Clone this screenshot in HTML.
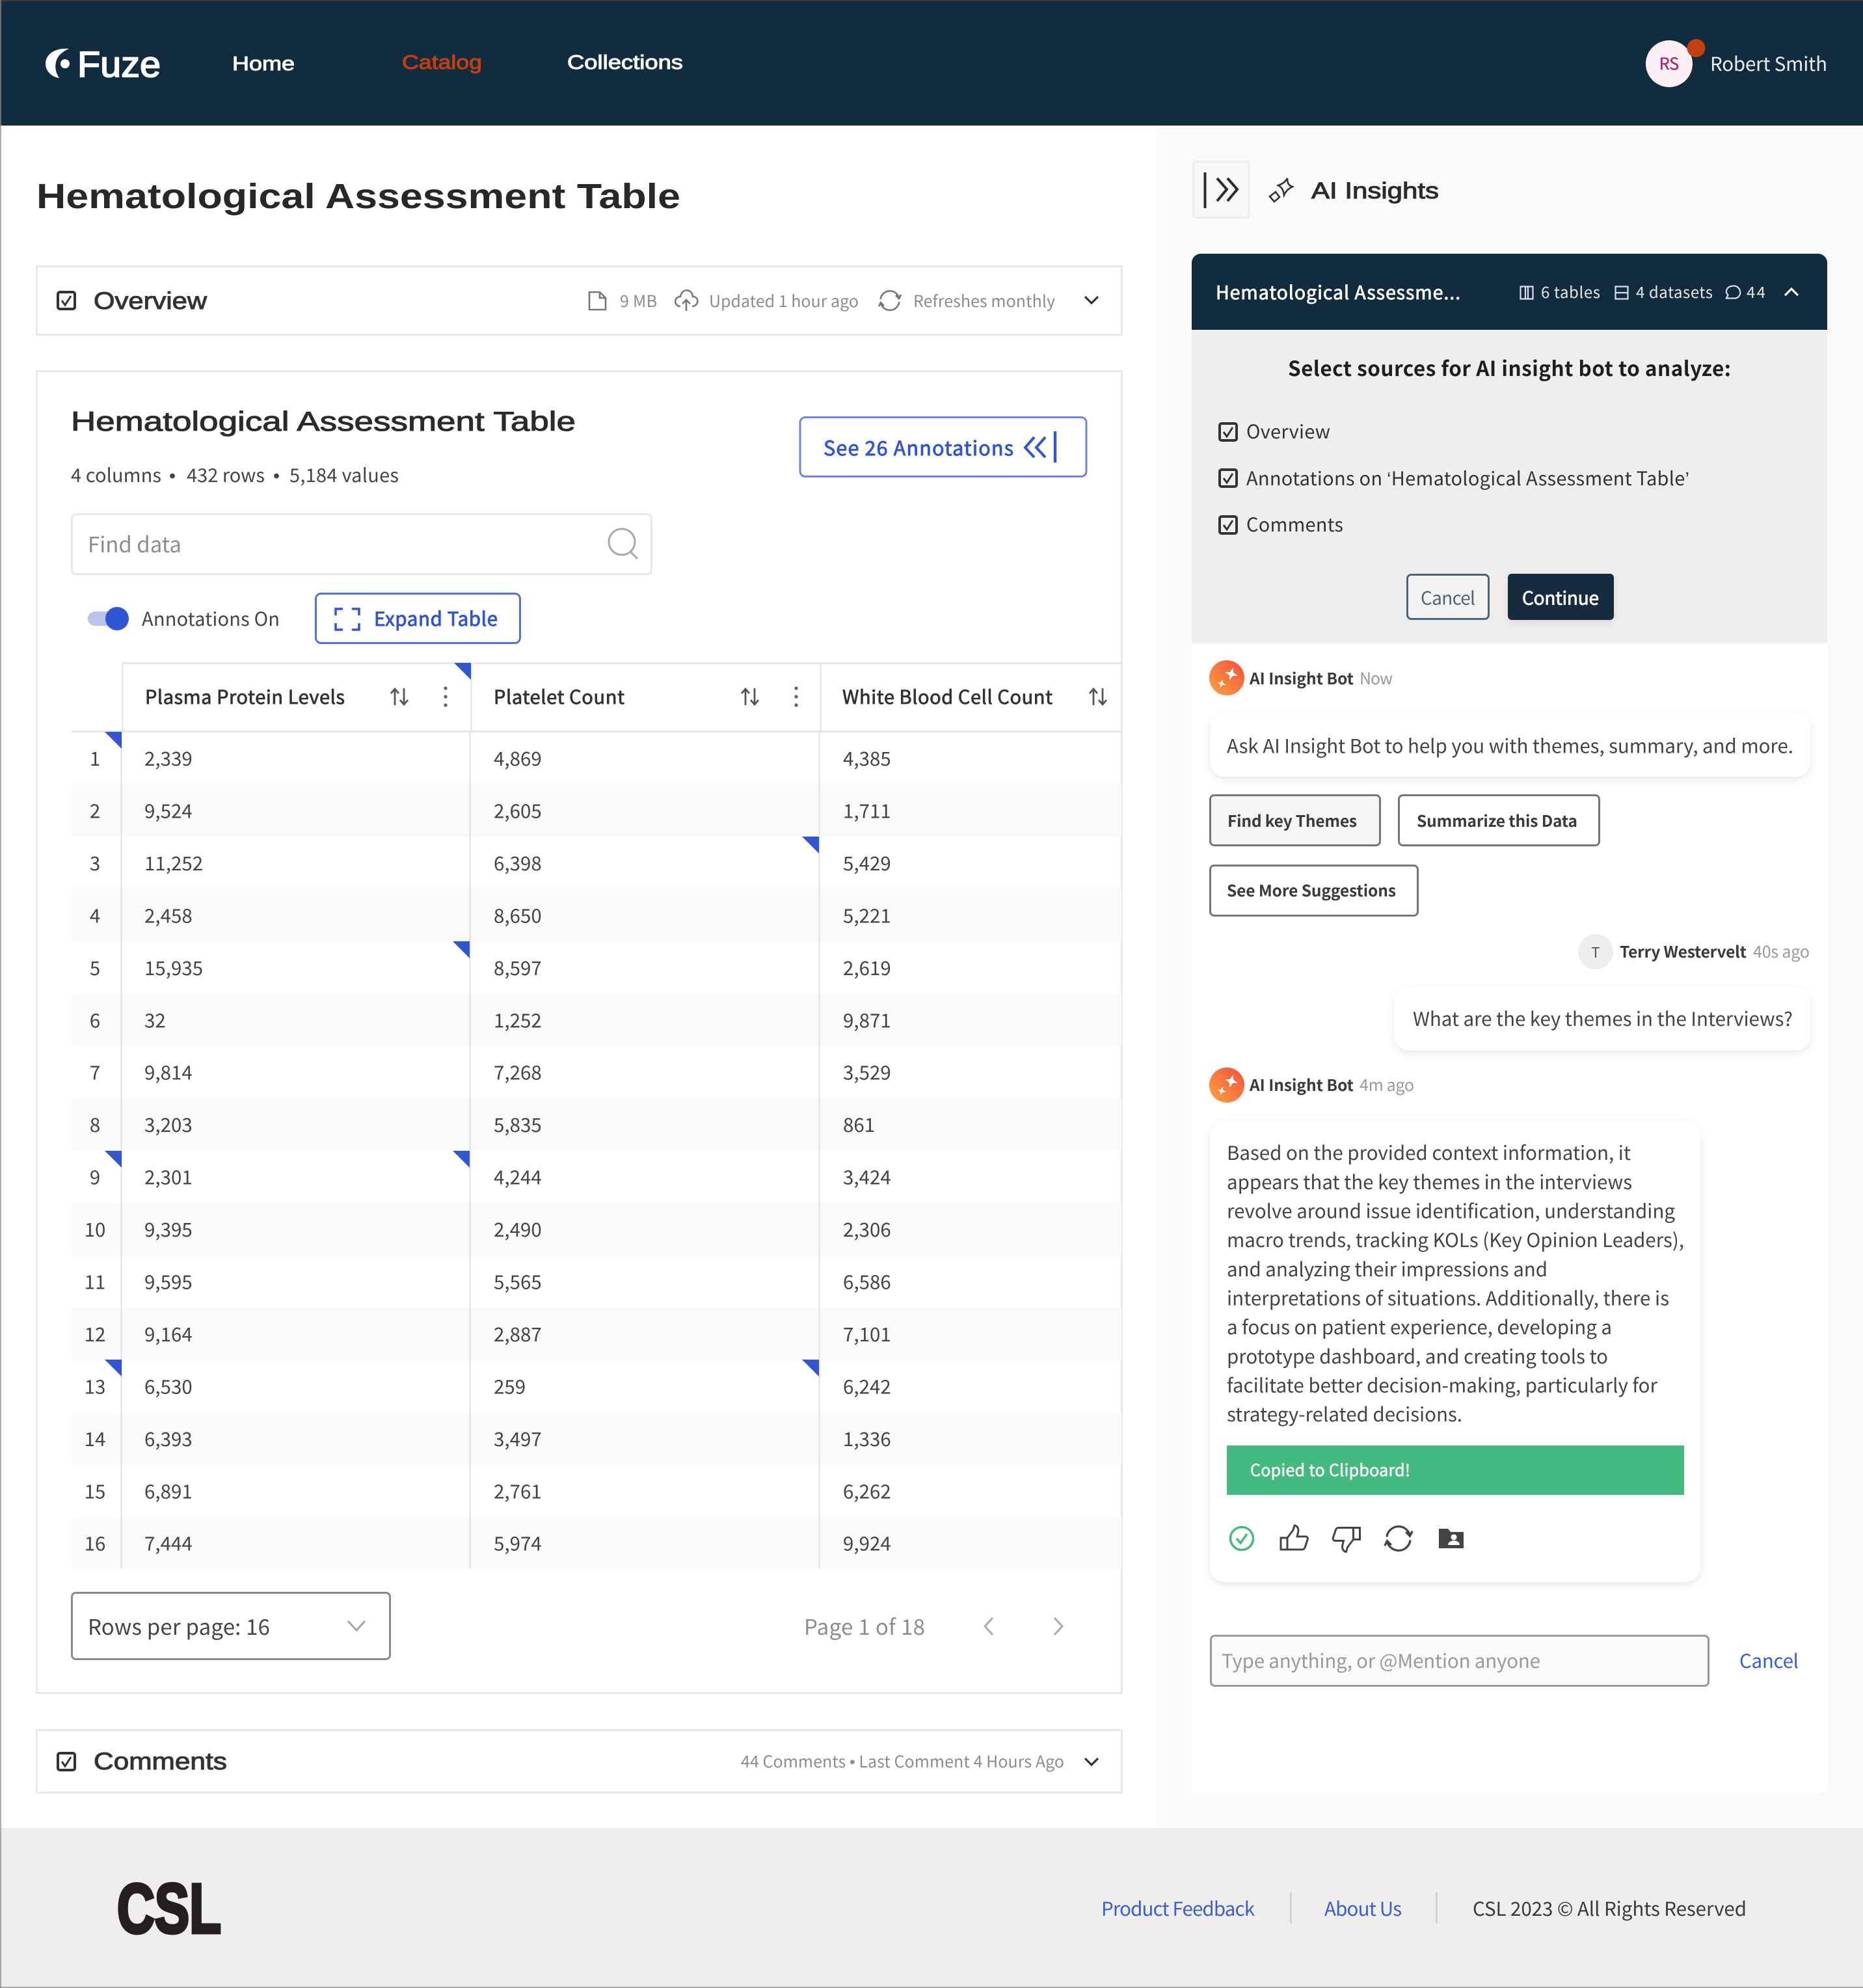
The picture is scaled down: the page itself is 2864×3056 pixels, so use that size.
<!DOCTYPE html>
<html lang="en"><head><meta charset="utf-8"><title>Hematological Assessment Table</title>
<style>
html,body{margin:0;padding:0;background:#fff}
svg{display:block}
text{font-family:"Noto Sans CJK SC","Liberation Sans",sans-serif;fill:#444;font-size:29px}
.m{font-family:"Liberation Sans",sans-serif;stroke-width:1}
.l{font-family:"Liberation Sans",sans-serif}
.c{text-anchor:middle}
.b{font-weight:700}
.g{fill:#8c8c8c}
.bl{fill:#3155d3}
.w{fill:#fff}
.row text{font-size:29.5px}
.msg text{font-size:29.5px}
</style></head><body>
<svg xmlns="http://www.w3.org/2000/svg" width="2864" height="3056" viewBox="0 0 2864 3056">
<defs>
<g id="cb" fill="none" stroke="#333"><rect x="2" y="2" width="26" height="26" rx="3" stroke-width="4"/><path d="M8 15l5 7 9-14" stroke-width="3"/></g>
<g id="sort" fill="none" stroke="#555" stroke-width="2.8"><path d="M7 26V1M1 8l6-7 6 7M21 0v25M15 18l6 7 6-7"/></g>
<g id="dots" fill="#666"><circle cx="0" cy="0" r="2.7"/><circle cx="0" cy="13" r="2.7"/><circle cx="0" cy="26" r="2.7"/></g>
<path id="star" d="M0-10L2.6-2.6 10 0 2.6 2.6 0 10-2.6 2.6-10 0-2.6-2.6Z"/>
<path id="tri" d="M-26 0H0V26Z" fill="#3155d3"/>
<linearGradient id="gr" x1="1" y1="0" x2="0" y2="1"><stop offset="0" stop-color="#f0503f"/><stop offset="1" stop-color="#ffa23e"/></linearGradient>
<filter id="sh" x="-5%" y="-20%" width="110%" height="140%"><feDropShadow dx="0" dy="4" stdDeviation="6" flood-color="#000" flood-opacity=".09"/></filter>
<g id="bot"><circle r="27" fill="url(#gr)"/><g fill="#fff"><use href="#star" transform="translate(7 -6) rotate(15)"/><use href="#star" transform="translate(-8 9) rotate(15) scale(.65)"/></g></g>
<g id="sync" fill="none" stroke-width="2.6"><path d="M-14.400-2A14.500 14.500 0 0 1 14-4M14.400 2A14.500 14.500 0 0 1-14 4"/><path d="M9-8l5 5 3-6M-9 8l-5-5-3 6"/></g>
</defs>

<rect width="2864" height="3056" fill="#fff"/>
<!-- Header -->
<rect width="2864" height="193" fill="#122c3f"/>
<rect width="2864" height="2" fill="#3b3b3b"/>
<path d="M106 75C84 73 70 84 70 98C70 108 78 118 91 120C86 112 84 104 86 96C88 86 96 79 106 75Z" fill="#fff"/>
<circle cx="100" cy="98" r="7" fill="#fff"/>
<text class="m w" x="119" y="118" style="font-size:56px;stroke-width:1.800px" stroke="#fff" textLength="128" lengthAdjust="spacingAndGlyphs">Fuze</text>
<text class="m w" x="357" y="108" style="font-size:31px" stroke="#fff" textLength="96" lengthAdjust="spacingAndGlyphs">Home</text>
<text class="m" x="618" y="106" style="font-size:31px;fill:#c23f12" stroke="#c23f12" textLength="123" lengthAdjust="spacingAndGlyphs">Catalog</text>
<text class="m w" x="872" y="106" style="font-size:31px" stroke="#fff" textLength="178" lengthAdjust="spacingAndGlyphs">Collections</text>
<circle cx="2566" cy="98" r="36" fill="#fcf0f6"/>
<circle cx="2607.500" cy="74" r="14" fill="#c23f12"/>
<text class="c" x="2566" y="107" style="font-size:25px;fill:#a8326a" stroke="#a8326a" stroke-width=".5">RS</text>
<text x="2629" y="109" style="font-size:29.500px;fill:#eee" textLength="180">Robert Smith</text>

<!-- Main left -->
<text class="m b" x="56" y="320" style="font-size:54px;fill:#282828" textLength="990" lengthAdjust="spacingAndGlyphs">Hematological Assessment Table</text>

<rect x="56.500" y="409.500" width="1668" height="105" fill="#fff" stroke="#e8e8e8" stroke-width="3"/>
<use href="#cb" x="87" y="447"/>
<text class="m" x="144" y="475" style="font-size:37px;fill:#333" stroke="#333" textLength="174" lengthAdjust="spacingAndGlyphs">Overview</text>
<path d="M906 449h16l9 9v18h-25zM922 449v9h9" fill="none" stroke="#777" stroke-width="2.600"/>
<text class="g" x="953" y="472" style="font-size:25px" textLength="57">9 MB</text>
<path d="M1046 471C1035 470 1036 456 1046 456C1048 443 1064 443 1065 456C1075 456 1075 470 1064 471M1055 478V461M1049 467l6-6 6 6" fill="none" stroke="#777" stroke-width="2.600"/>
<text class="g" x="1090" y="472" style="font-size:25px" textLength="230">Updated 1 hour ago</text>
<use href="#sync" transform="translate(1368 462)" stroke="#777"/>
<text class="g" x="1404" y="472" style="font-size:25px" textLength="218">Refreshes monthly</text>
<path d="M1668 456l10 10 10-10" fill="none" stroke="#333" stroke-width="3.200"/>

<rect x="56.500" y="570.500" width="1668" height="1032" fill="#fff" stroke="#e8e8e8" stroke-width="3" style="height:2032px"/>
<text class="m" x="109" y="662" style="font-size:42px;fill:#2b2b2b" stroke="#2b2b2b" textLength="776" lengthAdjust="spacingAndGlyphs">Hematological Assessment Table</text>
<text x="109" y="741" style="font-size:29px" textLength="139">4 columns</text>
<text class="l c" x="265" y="741" style="font-size:29px">•</text>
<text x="287" y="741" style="font-size:29px" textLength="120">432 rows</text>
<text class="l c" x="425" y="741" style="font-size:29px">•</text>
<text x="445" y="741" style="font-size:29px" textLength="168">5,184 values</text>

<rect x="1230" y="641.500" width="440" height="91" rx="8" fill="#fff" stroke="#6c86e2" stroke-width="3"/>
<text class="bl" x="1266" y="700" style="font-size:30.500px" stroke="#3155d3" stroke-width=".9" textLength="292">See 26 Annotations</text>
<path d="M1590 672l-14 16 14 15M1607 672l-14 16 14 15" fill="none" stroke="#3155d3" stroke-width="4"/>
<path d="M1622 663v48" stroke="#3155d3" stroke-width="4.500"/>

<rect x="110.500" y="790.500" width="891" height="92" rx="6" fill="#fff" stroke="#e8e8e8" stroke-width="3"/>
<text class="g" x="135" y="849" style="font-size:33px" textLength="144">Find data</text>
<circle cx="956" cy="833" r="20" fill="none" stroke="#a8a8a8" stroke-width="3"/>
<path d="M969 848l11 11" stroke="#a8a8a8" stroke-width="3"/>

<rect x="135" y="940" width="50" height="22" rx="11" fill="#b8c4ee"/>
<circle cx="180" cy="951" r="18" fill="#2f55d4"/>
<text x="218" y="962" style="font-size:29px" textLength="212">Annotations On</text>
<rect x="485.500" y="912.500" width="314" height="76" rx="8" fill="#fff" stroke="#5272dc" stroke-width="3"/>
<path d="M527 936h-11v10M541 936h11v10M527 968h-11v-10M541 968h11v-10" fill="none" stroke="#3155d3" stroke-width="3.500"/>
<text class="bl" x="575" y="962" style="font-size:29.500px" stroke="#3155d3" stroke-width=".9" textLength="190">Expand Table</text>

<!-- Table -->
<g fill="#fafafa">
<rect x="110" y="1205.500" width="1614" height="80.500"/>
<rect x="110" y="1366.400" width="1614" height="80.500"/>
<rect x="110" y="1527.300" width="1614" height="80.500"/>
<rect x="110" y="1688.200" width="1614" height="80.500"/>
<rect x="110" y="1849" width="1614" height="80.500"/>
<rect x="110" y="2010" width="1614" height="80.500"/>
<rect x="110" y="2171" width="1614" height="80.500"/>
<rect x="110" y="2332" width="1614" height="80"/>
</g>
<path d="M188 1019.500H1724" stroke="#e8e8e8" stroke-width="3"/>
<path d="M110 1124.500H1724" stroke="#e6e6e6" stroke-width="3"/>
<path d="M188.500 1019V1124M724.500 1019V1124M1261.500 1019V1124M186.500 1125V2412M722.500 1125V2412M1259.500 1125V2412" stroke="#e0e0e0" stroke-width="2"/>
<g stroke="#333" stroke-width=".8">
<text x="223" y="1082" style="fill:#333;font-size:29px" textLength="307">Plasma Protein Levels</text>
<text x="759" y="1082" style="fill:#333;font-size:29px" textLength="201">Platelet Count</text>
<text x="1295" y="1082" style="fill:#333;font-size:29px" textLength="323">White Blood Cell Count</text>
</g>
<use href="#sort" x="600" y="1058"/><use href="#sort" x="1139" y="1058"/><use href="#sort" x="1674" y="1058"/>
<use href="#dots" x="685" y="1058"/><use href="#dots" x="1224" y="1058"/>

<use href="#tri" x="724" y="1019"/>
<use href="#tri" x="187" y="1125"/>
<use href="#tri" x="1259" y="1286"/>
<use href="#tri" x="722" y="1447"/>
<use href="#tri" x="187" y="1769"/>
<use href="#tri" x="722" y="1769"/>
<use href="#tri" x="187" y="2090"/>
<use href="#tri" x="1259" y="2090"/>

<g class="row" transform="translate(0 1)">
<text class="c" x="146" y="1176">1</text><text x="222" y="1176">2,339</text><text x="759" y="1176">4,869</text><text x="1296" y="1176">4,385</text>
<text class="c" x="146" y="1256.500">2</text><text x="222" y="1256.500">9,524</text><text x="759" y="1256.500">2,605</text><text x="1296" y="1256.500">1,711</text>
<text class="c" x="146" y="1337">3</text><text x="222" y="1337">11,252</text><text x="759" y="1337">6,398</text><text x="1296" y="1337">5,429</text>
<text class="c" x="146" y="1417.400">4</text><text x="222" y="1417.400">2,458</text><text x="759" y="1417.400">8,650</text><text x="1296" y="1417.400">5,221</text>
<text class="c" x="146" y="1497.800">5</text><text x="222" y="1497.800">15,935</text><text x="759" y="1497.800">8,597</text><text x="1296" y="1497.800">2,619</text>
<text class="c" x="146" y="1578.300">6</text><text x="222" y="1578.300">32</text><text x="759" y="1578.300">1,252</text><text x="1296" y="1578.300">9,871</text>
<text class="c" x="146" y="1658.700">7</text><text x="222" y="1658.700">9,814</text><text x="759" y="1658.700">7,268</text><text x="1296" y="1658.700">3,529</text>
<text class="c" x="146" y="1739.200">8</text><text x="222" y="1739.200">3,203</text><text x="759" y="1739.200">5,835</text><text x="1296" y="1739.200">861</text>
<text class="c" x="146" y="1819.600">9</text><text x="222" y="1819.600">2,301</text><text x="759" y="1819.600">4,244</text><text x="1296" y="1819.600">3,424</text>
<text class="c" x="146" y="1900">10</text><text x="222" y="1900">9,395</text><text x="759" y="1900">2,490</text><text x="1296" y="1900">2,306</text>
<text class="c" x="146" y="1980.500">11</text><text x="222" y="1980.500">9,595</text><text x="759" y="1980.500">5,565</text><text x="1296" y="1980.500">6,586</text>
<text class="c" x="146" y="2061">12</text><text x="222" y="2061">9,164</text><text x="759" y="2061">2,887</text><text x="1296" y="2061">7,101</text>
<text class="c" x="146" y="2141.400">13</text><text x="222" y="2141.400">6,530</text><text x="759" y="2141.400">259</text><text x="1296" y="2141.400">6,242</text>
<text class="c" x="146" y="2221.800">14</text><text x="222" y="2221.800">6,393</text><text x="759" y="2221.800">3,497</text><text x="1296" y="2221.800">1,336</text>
<text class="c" x="146" y="2302.300">15</text><text x="222" y="2302.300">6,891</text><text x="759" y="2302.300">2,761</text><text x="1296" y="2302.300">6,262</text>
<text class="c" x="146" y="2382.700">16</text><text x="222" y="2382.700">7,444</text><text x="759" y="2382.700">5,974</text><text x="1296" y="2382.700">9,924</text>
</g>

<!-- Pagination -->
<rect x="110.500" y="2448.500" width="489" height="102" rx="6" fill="#fff" stroke="#8a8a8a" stroke-width="3"/>
<text x="135" y="2513" style="font-size:33px" textLength="280">Rows per page: 16</text>
<path d="M535 2492l13 14 13-14" fill="none" stroke="#a5a5a5" stroke-width="3"/>
<text class="g" x="1236" y="2513" style="font-size:33px" textLength="186">Page 1 of 18</text>
<path d="M1526 2487l-12 13 12 13M1621 2487l12 13-12 13" fill="none" stroke="#aaa" stroke-width="3"/>

<!-- Comments -->
<rect x="56.500" y="2659.500" width="1668" height="96" fill="#fff" stroke="#e8e8e8" stroke-width="3"/>
<use href="#cb" x="87" y="2693"/>
<text class="m" x="144" y="2720" style="font-size:37px;fill:#333" stroke="#333" textLength="205" lengthAdjust="spacingAndGlyphs">Comments</text>
<text class="g" x="1139" y="2717" style="font-size:25px" textLength="497">44 Comments <tspan class="l">•</tspan> Last Comment 4 Hours Ago</text>
<path d="M1668 2703l10 10 10-10" fill="none" stroke="#333" stroke-width="3.200"/>

<!-- Right panel -->
<rect x="1779" y="193" width="1085" height="2617" fill="#fafafa"/>
<rect x="1834.500" y="248.500" width="86" height="86" rx="4" fill="#f8f7f7" stroke="#eeeeee" stroke-width="3"/>
<path d="M1852.500 265v55" stroke="#2b2b2b" stroke-width="4"/>
<path d="M1871 274l15 17-15 18M1887 274l15 17-15 18" fill="none" stroke="#2b2b2b" stroke-width="4"/>
<path d="M1979 274C1979 282 1981 285 1987 287C1981 290 1977 293 1974 300C1973 293 1971 288 1965 285C1971 283 1976 280 1979 274Z" fill="none" stroke="#333" stroke-width="2.600"/>
<path d="M1961 295L1967 303L1959 310L1952 302Z" fill="none" stroke="#333" stroke-width="2.600"/>
<text class="m" x="2016" y="305" style="font-size:35px;fill:#2b2b2b" stroke="#2b2b2b" textLength="196" lengthAdjust="spacingAndGlyphs">AI Insights</text>

<path d="M1832 2755V404a14 14 0 0 1 14-14H2795a14 14 0 0 1 14 14V2745a10 10 0 0 1-10 10Z" fill="#fff"/>
<path d="M1832 507V404a14 14 0 0 1 14-14H2795a14 14 0 0 1 14 14V507Z" fill="#122c3f"/>
<rect x="1832" y="507" width="977" height="482" fill="#efeeec"/>
<text class="w" x="1869" y="460" style="font-size:28.500px;fill:#fff" stroke="#fff" stroke-width=".8" textLength="376">Hematological Assessme...</text>
<path d="M2337.500 440.500h19v19h-19zM2345 440.500v19M2349 440.500v19M2483.500 440.500h19v19h-19zM2483.500 450h19" fill="none" stroke="#dde" stroke-width="2.200"/>
<text x="2369" y="458" style="font-size:24px;fill:#e6e6e6" textLength="91">6 tables</text>
<text x="2515" y="458" style="font-size:24px;fill:#e6e6e6" textLength="118">4 datasets</text>
<path d="M2665 439.500c12 0 14 17 3 19h-14l2.500-5c-6-6-1-14 8.500-14Z" fill="none" stroke="#dde" stroke-width="2.200"/>
<text x="2685" y="458" style="font-size:24px;fill:#e6e6e6" textLength="29">44</text>
<path d="M2744 454l10-10 10 10" fill="none" stroke="#fff" stroke-width="3.200"/>

<text class="b" x="1980" y="578" style="font-size:31.500px;fill:#1e1e1e" textLength="681">Select sources for AI insight bot to analyze:</text>
<use href="#cb" x="1873" y="649"/><use href="#cb" x="1873" y="720"/><use href="#cb" x="1873" y="792"/>
<text x="1916" y="674" style="font-size:29px;fill:#333" textLength="129">Overview</text>
<text x="1916" y="746" style="font-size:29px;fill:#333" textLength="681">Annotations on <tspan class="l">‘</tspan>Hematological Assessment Table<tspan class="l">’</tspan></text>
<text x="1916" y="817" style="font-size:29px;fill:#333" textLength="149">Comments</text>

<rect x="2163.500" y="883.500" width="125" height="68" rx="6" fill="#f4f3f2" stroke="#4a6678" stroke-width="3"/>
<text x="2184" y="929.500" style="font-size:28px;fill:#4a6678" textLength="84">Cancel</text>
<rect x="2318" y="882" width="163" height="71" rx="6" fill="#122c3f" filter="url(#sh)"/>
<text x="2340" y="929.500" style="font-size:28px;fill:#fff" stroke="#fff" stroke-width=".8" textLength="118">Continue</text>

<use href="#bot" x="1886" y="1042"/>
<text class="b" x="1921" y="1052" style="font-size:24.500px;fill:#3a3a3a" textLength="160">AI Insight Bot</text>
<text x="2090" y="1052" style="font-size:25px;fill:#999" textLength="51">Now</text>
<rect x="1860" y="1095" width="923" height="99" rx="24" fill="#fff" filter="url(#sh)"/>
<text x="1886" y="1157.500" style="font-size:29.500px" textLength="871">Ask AI Insight Bot to help you with themes, summary, and more.</text>

<rect x="1860.500" y="1222.500" width="261" height="77" rx="6" fill="#f5f5f5" stroke="#777" stroke-width="3"/>
<text class="b" x="1887" y="1271" style="font-size:24.500px;fill:#3a3a3a" textLength="199">Find key Themes</text>
<rect x="2150.500" y="1222.500" width="308" height="77" rx="6" fill="#fff" stroke="#777" stroke-width="3"/>
<text class="b" x="2178" y="1271" style="font-size:24.500px;fill:#3a3a3a" textLength="247">Summarize this Data</text>
<rect x="1860.500" y="1330.500" width="319" height="77" rx="6" fill="#fff" stroke="#777" stroke-width="3"/>
<text class="b" x="1886" y="1378" style="font-size:24.500px;fill:#3a3a3a" textLength="260">See More Suggestions</text>

<circle cx="2453" cy="1463" r="27" fill="#eeedec"/>
<text class="c" x="2453" y="1472" style="font-size:22px;fill:#555">T</text>
<text class="b" x="2490" y="1472" style="font-size:24.500px;fill:#3a3a3a" textLength="195">Terry Westervelt</text>
<text x="2695" y="1472" style="font-size:25px;fill:#999" textLength="87">40s ago</text>
<rect x="2143" y="1517" width="640" height="98" rx="24" fill="#fff" filter="url(#sh)"/>
<text x="2172" y="1577" style="font-size:29.500px" textLength="584">What are the key themes in the Interviews?</text>

<use href="#bot" x="1886" y="1668"/>
<text class="b" x="1921" y="1677" style="font-size:24.500px;fill:#3a3a3a" textLength="160">AI Insight Bot</text>
<text x="2090" y="1677" style="font-size:25px;fill:#999" textLength="84">4m ago</text>

<rect x="1860" y="1723" width="754" height="709" rx="24" fill="#fff" filter="url(#sh)"/>
<g class="msg">
<text x="1886" y="1783" textLength="621">Based on the provided context information, it</text>
<text x="1886" y="1828" textLength="623">appears that the key themes in the interviews</text>
<text x="1886" y="1872.500" textLength="689">revolve around issue identification, understanding</text>
<text x="1886" y="1917" textLength="703">macro trends, tracking KOLs (Key Opinion Leaders),</text>
<text x="1886" y="1962" textLength="493">and analyzing their impressions and</text>
<text x="1886" y="2006.500" textLength="680">interpretations of situations. Additionally, there is</text>
<text x="1886" y="2051" textLength="592">a focus on patient experience, developing a</text>
<text x="1886" y="2096" textLength="586">prototype dashboard, and creating tools to</text>
<text x="1886" y="2140.500" textLength="662">facilitate better decision-making, particularly for</text>
<text x="1886" y="2185" textLength="362">strategy-related decisions.</text>
</g>
<rect x="1886" y="2222" width="703" height="76" fill="#45ba80"/>
<text x="1922" y="2269" style="font-size:25px;fill:#fff" stroke="#fff" stroke-width=".6" textLength="246">Copied to Clipboard!</text>

<circle cx="1909" cy="2365" r="17.500" fill="none" stroke="#45ba80" stroke-width="3.500"/>
<path d="M1901 2365l6 7 10-14" fill="none" stroke="#45ba80" stroke-width="3.500"/>
<path id="thumb" d="M1979 2364L1988 2352L1990 2345C1996 2346 1997 2352 1995 2358L1994 2362H2007C2010 2362 2011 2365 2010 2367L2006 2379C2005 2381 2004 2382 2002 2382H1969V2364ZM1979 2364V2382" fill="none" stroke="#444" stroke-width="3"/>
<use href="#thumb" transform="translate(4059.500 4730.500) rotate(180)"/>
<use href="#sync" transform="translate(2150 2365) scale(1.250)" stroke="#444"/>
<path d="M2212 2350h14l4 5h20v25h-38Z" fill="#444"/>
<circle cx="2235" cy="2363" r="4.500" fill="#fff"/><path d="M2226 2375c0-9 18-9 18 0Z" fill="#fff"/>

<rect x="1861.500" y="2514.500" width="765" height="77" rx="6" fill="#fafafa" stroke="#9a9a9a" stroke-width="3"/>
<text x="1878" y="2564" style="font-size:29.500px;fill:#999" textLength="490">Type anything, or @Mention anyone</text>
<text x="2674" y="2564" style="font-size:29.500px;fill:#3a5dd6" textLength="91">Cancel</text>

<!-- Footer -->
<rect y="2810" width="2864" height="246" fill="#efeeec"/>
<rect y="3054" width="2864" height="2" fill="#a8a8a8"/>
<text class="b" x="180" y="2971" style="font-family:'Liberation Sans',sans-serif;font-size:108px;fill:#231f20" stroke="#231f20" stroke-width="5" textLength="160" lengthAdjust="spacingAndGlyphs">CSL</text>
<text x="1693" y="2945" style="font-size:29.500px;fill:#3a5dd6" textLength="236">Product Feedback</text>
<path d="M1984.500 2909v48M2208.500 2909v48" stroke="#c8c8c8" stroke-width="2"/>
<text x="2036" y="2945" style="font-size:29.500px;fill:#3a5dd6" textLength="119">About Us</text>
<text x="2264" y="2945" style="font-size:29.500px;fill:#3a3a3a" textLength="421">CSL 2023 © All Rights Reserved</text>
<rect width="2" height="3056" fill="#8a8a8a" opacity=".7"/>
</svg>
</body></html>
